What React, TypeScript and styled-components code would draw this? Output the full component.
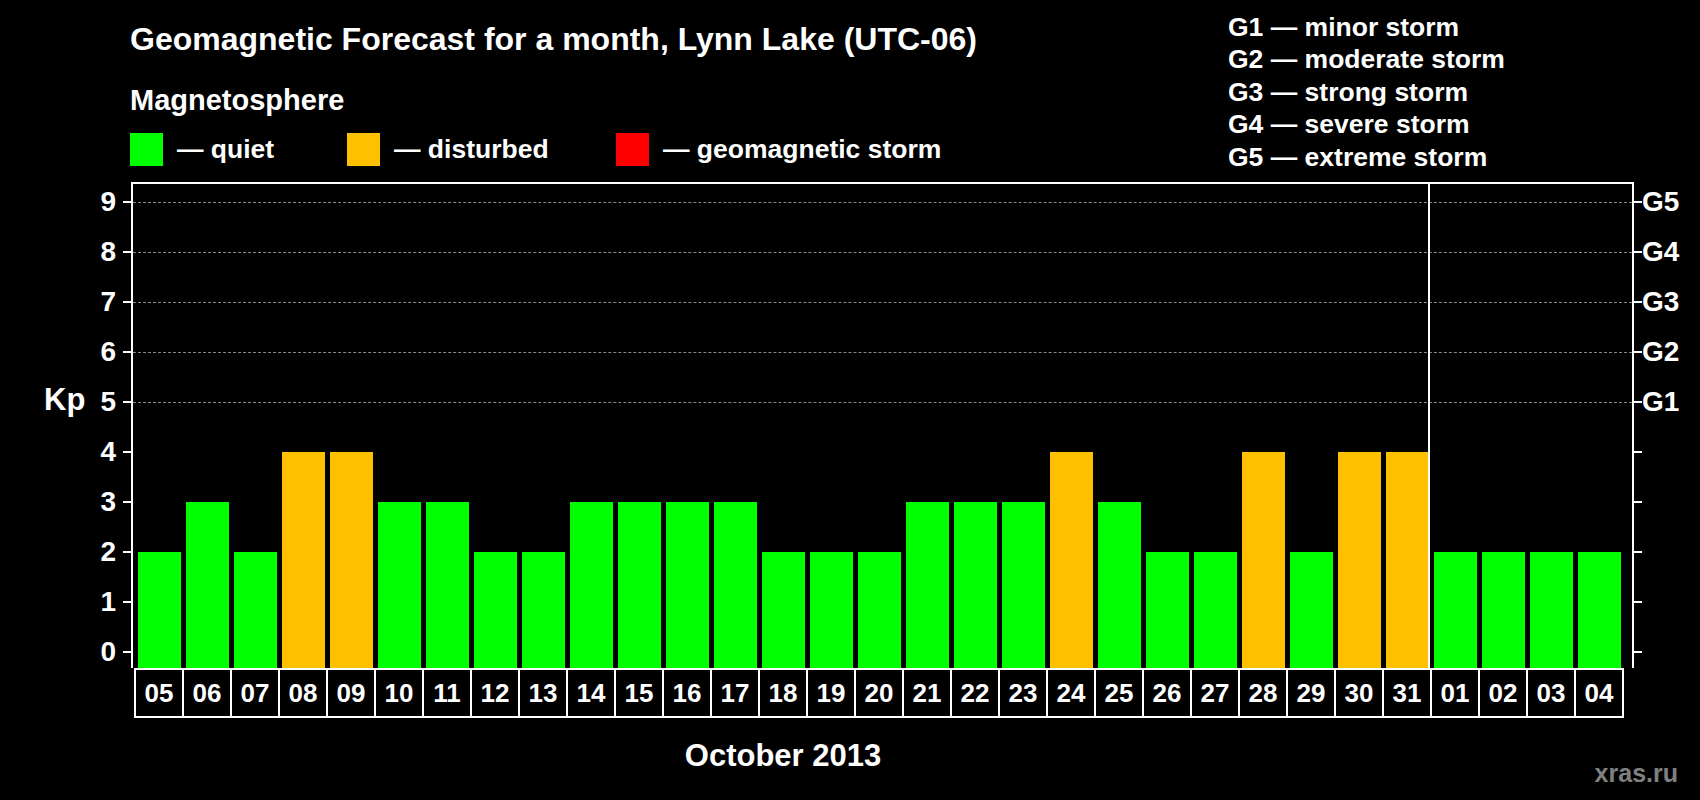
import React from 'react';
import styled, { createGlobalStyle } from 'styled-components';

const GlobalStyle = createGlobalStyle`
  body {
    margin: 0;
    background: #000;
    font-family: "Liberation Sans", Arial, sans-serif;
  }
`;

const QUIET = '#00ff00';
const DISTURBED = '#ffc000';
const STORM = '#ff0000';

const days = [
  ['05', 2], ['06', 3], ['07', 2], ['08', 4], ['09', 4], ['10', 3], ['11', 3], ['12', 2],
  ['13', 2], ['14', 3], ['15', 3], ['16', 3], ['17', 3], ['18', 2], ['19', 2], ['20', 2],
  ['21', 3], ['22', 3], ['23', 3], ['24', 4], ['25', 3], ['26', 2], ['27', 2], ['28', 4],
  ['29', 2], ['30', 4], ['31', 4], ['01', 2], ['02', 2], ['03', 2], ['04', 2],
] as [string, number][];

const storms = [
  'G1 — minor storm',
  'G2 — moderate storm',
  'G3 — strong storm',
  'G4 — severe storm',
  'G5 — extreme storm',
];

// y inside the plot (from its inner top) for a Kp value
const kpY = (v: number) => 468 - 50 * v;

const Page = styled.div`
  position: relative;
  width: 1700px;
  height: 800px;
  background: #000;
  color: #fff;
  font-weight: bold;
  overflow: hidden;
`;

const Header = styled.div`
  display: grid;
  grid-template-columns: 1228px 1fr;
  height: 182px;
`;

const HeaderLeft = styled.div`
  padding: 24px 0 0 130px;
`;

const Title = styled.div`
  font-size: 32px;
  line-height: 30px;
  white-space: nowrap;
`;

const Subtitle = styled.div`
  font-size: 29px;
  line-height: 30px;
  margin-top: 31px;
`;

const Legend = styled.div`
  display: flex;
  align-items: center;
  margin-top: 18px;
`;

const LegendItem = styled.div<{ $w: number }>`
  display: flex;
  align-items: center;
  gap: 14px;
  width: ${p => p.$w}px;
  font-size: 26.5px;
  white-space: nowrap;
`;

const Swatch = styled.span<{ $c: string }>`
  width: 33px;
  height: 33px;
  background: ${p => p.$c};
`;

const StormList = styled.div`
  padding-top: 11px;
`;

const StormLine = styled.div`
  font-size: 26.5px;
  line-height: 32.4px;
  white-space: nowrap;
`;

const ChartColumn = styled.div`
  margin-left: 131px;
  width: 1503px;
`;

const Frame = styled.div`
  position: relative;
  box-sizing: border-box;
  height: 486px;
  border: 2px solid #fff;
  border-bottom: none;
`;

const GridLine = styled.div`
  position: absolute;
  left: 0;
  right: 0;
  border-top: 1px dashed #888;
`;

const Tick = styled.div<{ $side: 'left' | 'right' }>`
  position: absolute;
  ${p => p.$side}: -10px;
  width: 8px;
  border-top: 2px solid #fff;
`;

const AxisLabel = styled.div<{ $side: 'left' | 'right' }>`
  position: absolute;
  ${p => (p.$side === 'left' ? 'right: calc(100% + 17px);' : 'left: calc(100% + 10px);')}
  font-size: 28px;
  line-height: 30px;
  transform: translateY(-50%);
`;

const KpLabel = styled.div`
  position: absolute;
  left: -89px;
  top: 201px;
  font-size: 31px;
  line-height: 30px;
`;

const Bars = styled.div`
  display: flex;
  align-items: flex-end;
  height: 100%;
  padding-left: 1px;
`;

const BarSlot = styled.div<{ $split?: boolean }>`
  position: relative;
  display: flex;
  align-items: flex-end;
  width: 48px;
  height: 100%;
  &::before {
    content: '';
    display: ${p => (p.$split ? 'block' : 'none')};
    position: absolute;
    left: -2px;
    top: 0;
    bottom: 0;
    border-left: 2px solid #fff;
  }
`;

const Bar = styled.div<{ $c: string }>`
  margin-left: 4px;
  width: 43px;
  background: ${p => p.$c};
`;

const DayRow = styled.div`
  display: flex;
  margin-left: 3px;
  width: fit-content;
  border-left: 2px solid #fff;
  border-top: 2px solid #fff;
  border-bottom: 2px solid #fff;
`;

const DayCell = styled.div`
  box-sizing: border-box;
  width: 48px;
  height: 46px;
  border-right: 2px solid #fff;
  display: flex;
  align-items: center;
  justify-content: center;
  font-size: 26px;
`;

const Month = styled.div`
  width: 1304px;
  text-align: center;
  margin-top: 20px;
  font-size: 31px;
`;

const Watermark = styled.div`
  position: absolute;
  right: 22px;
  bottom: 12px;
  color: #808080;
  font-size: 25px;
`;

const App = () => {
  const levels = [0, 1, 2, 3, 4, 5, 6, 7, 8, 9];
  return (
    <Page>
      <GlobalStyle />
      <Header>
        <HeaderLeft>
          <Title>Geomagnetic Forecast for a month, Lynn Lake (UTC-06)</Title>
          <Subtitle>Magnetosphere</Subtitle>
          <Legend>
            <LegendItem $w={217}><Swatch $c={QUIET} />— quiet</LegendItem>
            <LegendItem $w={269}><Swatch $c={DISTURBED} />— disturbed</LegendItem>
            <LegendItem $w={360}><Swatch $c={STORM} />— geomagnetic storm</LegendItem>
          </Legend>
        </HeaderLeft>
        <StormList>
          {storms.map(s => <StormLine key={s}>{s}</StormLine>)}
        </StormList>
      </Header>
      <ChartColumn>
        <Frame>
          {[5, 6, 7, 8, 9].map(v => <GridLine key={v} style={{ top: kpY(v) }} />)}
          {levels.map(v => (
            <React.Fragment key={v}>
              <Tick $side="left" style={{ top: kpY(v) - 1 }} />
              <Tick $side="right" style={{ top: kpY(v) - 1 }} />
              <AxisLabel $side="left" style={{ top: kpY(v) }}>{v}</AxisLabel>
              {v >= 5 && <AxisLabel $side="right" style={{ top: kpY(v) }}>G{v - 4}</AxisLabel>}
            </React.Fragment>
          ))}
          <KpLabel>Kp</KpLabel>
          <Bars>
            {days.map(([d, v], i) => (
              <BarSlot key={d + i} $split={i === 27}>
                <Bar $c={v >= 5 ? STORM : v >= 4 ? DISTURBED : QUIET} style={{ height: 16 + 50 * v }} />
              </BarSlot>
            ))}
          </Bars>
        </Frame>
        <DayRow>
          {days.map(([d], i) => <DayCell key={d + i}>{d}</DayCell>)}
        </DayRow>
        <Month>October 2013</Month>
      </ChartColumn>
      <Watermark>xras.ru</Watermark>
    </Page>
  );
};

export default App;
